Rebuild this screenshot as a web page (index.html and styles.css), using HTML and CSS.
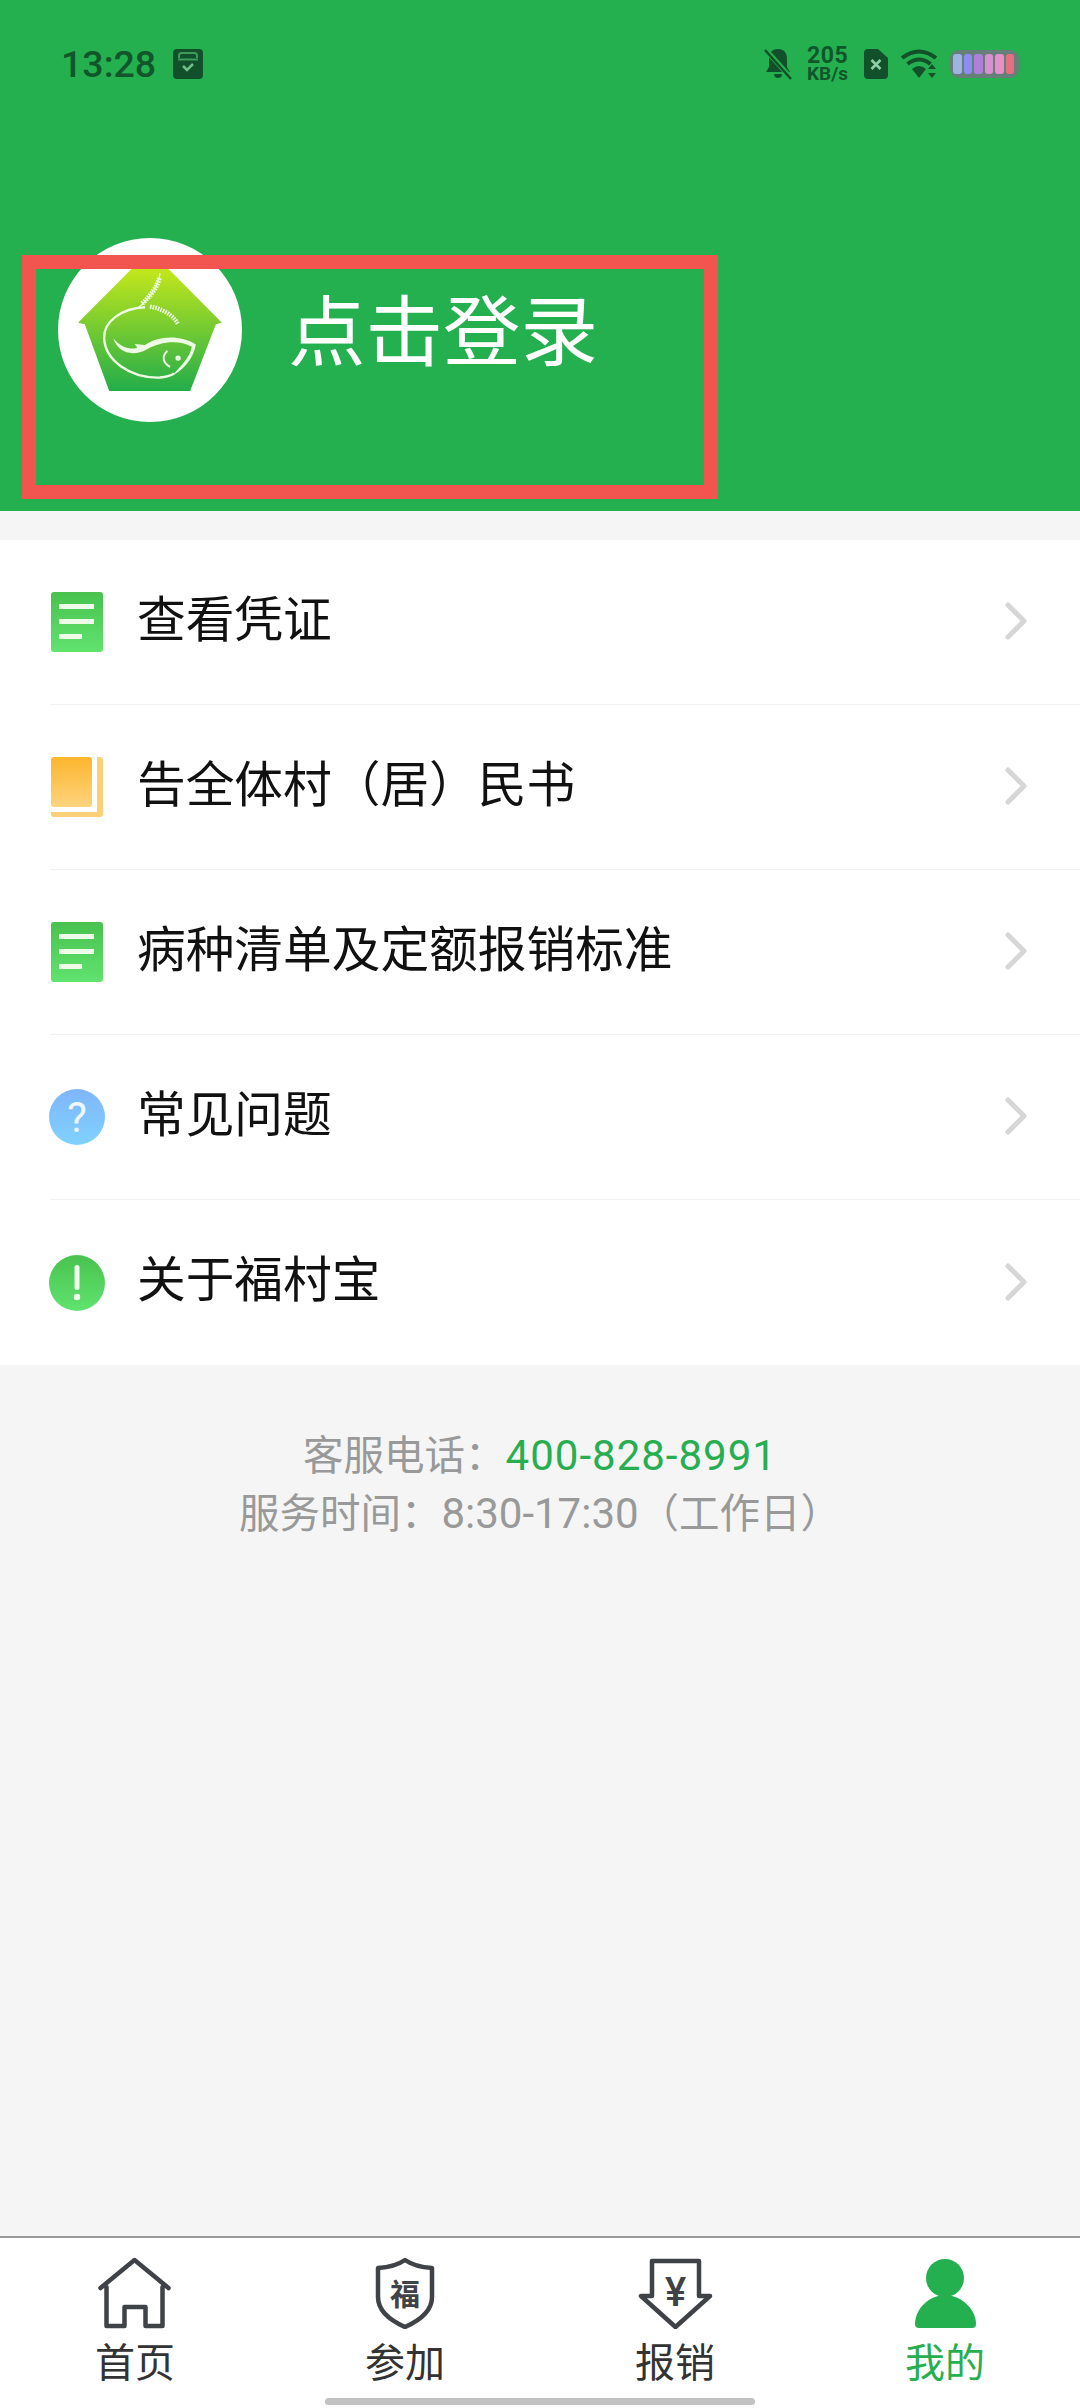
FILE: index.html
```html
<!DOCTYPE html>
<html lang="zh-CN">
<head>
    <meta charset="UTF-8">
    <meta name="viewport" content="width=device-width, initial-scale=1.0">
    <title>我的</title>
    <link rel="stylesheet" href="styles.css">
</head>
<body>
    <div class="page">
        <header class="header">
            <div class="status-bar">
                <div class="status-left">
                    <span class="time">13:28</span>
                    <svg class="status-icon" width="30" height="30" viewBox="0 0 30 30">
                        <rect width="30" height="30" rx="4" fill="#11502a"/>
                        <path d="M6 9V6.5Q6 4 8.5 4h13Q24 4 24 6.500V9" fill="none" stroke="#3f9a5c" stroke-width="2"/>
                        <path d="M5 10.500h20" stroke="#3f9a5c" stroke-width="2"/>
                        <path d="M10 17l4 4 6-6" fill="none" stroke="#6fbf88" stroke-width="2.500"/>
                    </svg>
                </div>
                <div class="status-right">
                    <svg width="28" height="32" viewBox="0 0 28 32">
                        <path d="M14 1c6 0 9 4 9 10v8l3 5H2l3-5v-8c0-6 3-10 9-10zM10 26h8a4 4 0 0 1-8 0z" fill="#11502a"/>
                        <path d="M1 1l26 29" stroke="#24b04f" stroke-width="5"/>
                        <path d="M1 2l26 29" stroke="#11502a" stroke-width="2.500"/>
                    </svg>
                    <div class="net-speed">
                        <span class="net-num">205</span>
                        <span class="net-unit">KB/s</span>
                    </div>
                    <svg width="24" height="30" viewBox="0 0 24 30">
                        <path d="M4 0h10l10 9v17a4 4 0 0 1-4 4H4a4 4 0 0 1-4-4V4a4 4 0 0 1 4-4z" fill="#11502a"/>
                        <path d="M7.500 11l9 9M16.500 11l-9 9" stroke="#8fcfa5" stroke-width="2.600"/>
                    </svg>
                    <svg width="36" height="30" viewBox="0 0 36 30">
                        <g fill="none" stroke="#11502a" stroke-width="4">
                            <path d="M1 9Q18 -4 35 9"/>
                            <path d="M6.500 15Q18 6 29.500 15"/>
                        </g>
                        <path d="M11 20Q18 14 25 20L18 29z" fill="#11502a"/>
                        <path d="M31 15l4 5h-8zM31 29l4-5h-8z" fill="#11502a"/>
                    </svg>
                    <div class="battery">
                        <span class="cell cell-1"></span>
                        <span class="cell cell-2"></span>
                        <span class="cell cell-3"></span>
                        <span class="cell cell-4"></span>
                        <span class="cell cell-5"></span>
                        <span class="cell cell-6"></span>
                    </div>
                </div>
            </div>

            <div class="profile">
                <div class="avatar">
                    <svg width="184" height="184" viewBox="25 25 550 550">
                        <defs>
                            <linearGradient id="houseFill" x1="0" y1="0" x2="0" y2="1">
                                <stop offset="0" stop-color="#cdea18"/>
                                <stop offset="1" stop-color="#22ad4a"/>
                            </linearGradient>
                        </defs>
                        <path d="M85 278L240 122Q300 70 360 122L515 278L497 283L420 482H178L105 283z" fill="url(#houseFill)"/>
                        <path d="M285 232C215 235 160 275 163 325C166 390 240 445 330 442C345 441 360 438 372 430" fill="none" stroke="#eefbe4" stroke-width="7"/>
                        <path d="M190 325C210 350 240 362 262 352L254 342L285 345C320 318 390 312 437 343C430 385 400 420 366 436C395 405 420 380 425 350C385 328 330 335 290 358C250 380 205 370 190 325z" fill="#eefbe4"/>
                        <path d="M352 362C333 380 340 400 360 410" fill="none" stroke="#eefbe4" stroke-width="6"/>
                        <circle cx="384" cy="384" r="8" fill="#eefbe4"/>
                        <path d="M330 130C325 170 300 205 262 236" fill="none" stroke="#eefbe4" stroke-width="4"/>
                        <path d="M328 145C320 175 300 200 275 222" fill="none" stroke="#eefbe4" stroke-width="15" stroke-dasharray="5 3"/>
                        <path d="M300 230C330 235 365 250 383 281" fill="none" stroke="#eefbe4" stroke-width="13" stroke-dasharray="5 3"/>
                    </svg>
                </div>
                <span class="login-text">点击登录</span>
            </div>

            <div class="mark-box"></div>
        </header>

        <ul class="menu">
            <li class="menu-row">
                <div class="menu-inner">
                    <svg class="menu-icon" width="52" height="60" viewBox="0 0 52 60">
                        <defs>
                            <linearGradient id="greenFill" x1="0" y1="0" x2="0" y2="1">
                                <stop offset="0" stop-color="#49c24f"/>
                                <stop offset="1" stop-color="#60e36f"/>
                            </linearGradient>
                        </defs>
                        <rect width="52" height="60" rx="3" fill="url(#greenFill)"/>
                        <rect x="8" y="12" width="35" height="5" fill="#eefbe9"/>
                        <rect x="8" y="27" width="35" height="5" fill="#eefbe9"/>
                        <rect x="8" y="42" width="23" height="5" fill="#eefbe9"/>
                    </svg>
                    <span class="menu-text">查看凭证</span>
                    <svg class="chevron" width="22" height="38" viewBox="0 0 22 38">
                        <path d="M3 3l16 16L3 35" fill="none" stroke="#d6d6d6" stroke-width="5" stroke-linecap="round" stroke-linejoin="round"/>
                    </svg>
                </div>
            </li>
            <li class="menu-row">
                <div class="menu-inner">
                    <svg class="menu-icon" width="52" height="60" viewBox="0 0 52 60">
                        <defs>
                            <linearGradient id="yellowFill" x1="0" y1="0" x2="0" y2="1">
                                <stop offset="0" stop-color="#fdb52c"/>
                                <stop offset="1" stop-color="#fdd47e"/>
                            </linearGradient>
                        </defs>
                        <rect width="41" height="50" rx="3" fill="url(#yellowFill)"/>
                        <path d="M46 0h3q3 0 3 3v54q0 3-3 3H3q-3 0-3-3v-2h46z" fill="#fbd078"/>
                    </svg>
                    <span class="menu-text">告全体村（居）民书</span>
                    <svg class="chevron" width="22" height="38" viewBox="0 0 22 38">
                        <path d="M3 3l16 16L3 35" fill="none" stroke="#d6d6d6" stroke-width="5" stroke-linecap="round" stroke-linejoin="round"/>
                    </svg>
                </div>
            </li>
            <li class="menu-row">
                <div class="menu-inner">
                    <svg class="menu-icon" width="52" height="60" viewBox="0 0 52 60">
                        <rect width="52" height="60" rx="3" fill="url(#greenFill)"/>
                        <rect x="8" y="12" width="35" height="5" fill="#eefbe9"/>
                        <rect x="8" y="27" width="35" height="5" fill="#eefbe9"/>
                        <rect x="8" y="42" width="23" height="5" fill="#eefbe9"/>
                    </svg>
                    <span class="menu-text">病种清单及定额报销标准</span>
                    <svg class="chevron" width="22" height="38" viewBox="0 0 22 38">
                        <path d="M3 3l16 16L3 35" fill="none" stroke="#d6d6d6" stroke-width="5" stroke-linecap="round" stroke-linejoin="round"/>
                    </svg>
                </div>
            </li>
            <li class="menu-row">
                <div class="menu-inner">
                    <svg class="menu-icon round" width="56" height="56" viewBox="0 0 56 56">
                        <defs>
                            <linearGradient id="blueFill" x1="0" y1="0" x2="0" y2="1">
                                <stop offset="0" stop-color="#7fb6fb"/>
                                <stop offset="1" stop-color="#7fd2ff"/>
                            </linearGradient>
                        </defs>
                        <circle cx="28" cy="28" r="28" fill="url(#blueFill)"/>
                        <text x="28" y="43" class="icon-mark">?</text>
                    </svg>
                    <span class="menu-text">常见问题</span>
                    <svg class="chevron" width="22" height="38" viewBox="0 0 22 38">
                        <path d="M3 3l16 16L3 35" fill="none" stroke="#d6d6d6" stroke-width="5" stroke-linecap="round" stroke-linejoin="round"/>
                    </svg>
                </div>
            </li>
            <li class="menu-row">
                <div class="menu-inner">
                    <svg class="menu-icon round" width="56" height="56" viewBox="0 0 56 56">
                        <circle cx="28" cy="28" r="28" fill="url(#greenFill)"/>
                        <rect x="25.500" y="10" width="5" height="25" rx="2.500" fill="#f2fcee"/>
                        <circle cx="28" cy="42" r="3.200" fill="#f2fcee"/>
                    </svg>
                    <span class="menu-text">关于福村宝</span>
                    <svg class="chevron" width="22" height="38" viewBox="0 0 22 38">
                        <path d="M3 3l16 16L3 35" fill="none" stroke="#d6d6d6" stroke-width="5" stroke-linecap="round" stroke-linejoin="round"/>
                    </svg>
                </div>
            </li>
        </ul>

        <div class="service">
            <div>客服电话：<span class="phone">400-828-8991</span></div>
            <div>服务时间：<span class="hours">8:30-17:30</span>（工作日）</div>
        </div>

        <nav class="tabbar">
            <div class="tab">
                <svg width="76" height="72" viewBox="0 0 76 72">
                    <path d="M4 31L38 3l34 28M10 30v39h18V50h21v19h17V30" transform="translate(-.5 0)" fill="none" stroke="#3f4246" stroke-width="4.500" stroke-linecap="round" stroke-linejoin="round"/>
                </svg>
                <span class="tab-label">首页</span>
            </div>
            <div class="tab">
                <svg width="76" height="72" viewBox="0 0 76 72">
                    <path d="M38 3Q48 10 65 11V40Q65 58 38 70Q11 58 11 40V11Q28 10 38 3z" fill="none" stroke="#3f4246" stroke-width="4.500" stroke-linejoin="round"/>
                    <text x="38" y="48" class="shield-mark">福</text>
                </svg>
                <span class="tab-label">参加</span>
            </div>
            <div class="tab">
                <svg width="76" height="72" viewBox="0 0 76 72">
                    <path d="M15 4H62V39H73L38.500 70L4 39H15z" fill="none" stroke="#3f4246" stroke-width="4.500" stroke-linejoin="round"/>
                    <text x="38.500" y="49" class="yuan-mark">¥</text>
                </svg>
                <span class="tab-label">报销</span>
            </div>
            <div class="tab active">
                <svg width="76" height="72" viewBox="0 0 76 72">
                    <circle cx="38" cy="21" r="19" fill="#24b04f"/>
                    <path d="M8 67C8 52 22 38 38 38S69 52 69 67Q69 71 65 71H12Q8 71 8 67z" fill="#24b04f"/>
                </svg>
                <span class="tab-label">我的</span>
            </div>
            <div class="home-bar"></div>
        </nav>
    </div>
</body>
</html>
```

FILE: styles.css
```css
* {
    box-sizing: border-box;
}

body {
    font-family: Roboto, "Noto Sans CJK SC", sans-serif;
    background-color: #f5f5f5;
    margin: 0;
    padding: 0;
}

.page {
    width: 1080px;
    height: 2408px;
    display: flex;
    flex-direction: column;
    overflow: hidden;
}

/* header */
.header {
    position: relative;
    height: 511px;
    background-color: #24b04f;
}

.status-bar {
    height: 128px;
    padding: 0 61px 0 61px;
    display: flex;
    align-items: center;
    justify-content: space-between;
    color: #11552b;
}

.status-left,
.status-right {
    display: flex;
    align-items: center;
}

.status-left {
    gap: 17px;
}

.status-right {
    gap: 13px;
}

.time {
    font-size: 37.5px;
    font-weight: 500;
    line-height: 40px;
}

.net-speed {
    display: flex;
    flex-direction: column;
    font-weight: 700;
    width: 44px;
    margin-left: 2px;
}

.net-num {
    font-size: 23px;
    line-height: 19px;
    letter-spacing: 0.5px;
}

.net-unit {
    font-size: 19px;
    line-height: 17px;
}

.battery {
    width: 69px;
    height: 28px;
    padding: 4px 3px;
    display: flex;
    gap: 2px;
    border-radius: 9px;
    background-color: #667f78;
}

.cell {
    width: 8.5px;
    border-radius: 3px;
}

.cell-1 { background-color: #9db4e2; }
.cell-2 { background-color: #8d8cf2; }
.cell-3 { background-color: #b07fd8; }
.cell-4 { background-color: #d890d0; }
.cell-5 { background-color: #e68fc8; }
.cell-6 { background-color: #e86f7f; }

.profile {
    margin-top: 110px;
    padding-left: 58px;
    display: flex;
    align-items: center;
    gap: 46px;
}

.avatar {
    width: 184px;
    height: 184px;
    border-radius: 50%;
    background: white;
    overflow: hidden;
}

.avatar svg {
    display: block;
}

.login-text {
    font-size: 77.5px;
    line-height: 90px;
    margin-top: 8px;
    color: white;
}

.mark-box {
    position: absolute;
    left: 22px;
    top: 255px;
    width: 696px;
    height: 244px;
    border: 14px solid #f2544f;
}

/* list */
.menu {
    list-style: none;
    margin: 29px 0 0;
    padding: 0 0 0 50px;
    background: white;
}

.menu-inner {
    height: 165px;
    padding-right: 53px;
    display: flex;
    align-items: center;
    border-bottom: 1px solid #f2f2f2;
}

.menu-row:last-child .menu-inner {
    border-bottom: none;
}

.menu-icon {
    margin-left: 1px;
    margin-right: 34px;
    flex-shrink: 0;
}

.menu-icon.round {
    margin-left: -1px;
    margin-right: 32px;
}

.menu-text {
    flex: 1;
    font-size: 48.7px;
    color: #111;
    margin-top: -13px;
}

.chevron {
    margin-top: -2px;
}

.icon-mark {
    font-family: Roboto, sans-serif;
    font-size: 42px;
    text-anchor: middle;
    fill: #eef7ff;
}

.shield-mark {
    font-family: "Noto Sans CJK SC", sans-serif;
    font-size: 30px;
    font-weight: 700;
    text-anchor: middle;
    fill: #3f4246;
}

.yuan-mark {
    font-family: Roboto, sans-serif;
    font-size: 40px;
    font-weight: 500;
    text-anchor: middle;
    fill: #3f4246;
}

/* service info */
.service {
    flex: 1;
    padding-top: 62px;
    text-align: center;
    font-size: 40.5px;
    line-height: 57px;
    color: #999;
}

.phone {
    font-size: 42px;
    letter-spacing: 1px;
    color: #27ae50;
}

.hours {
    font-size: 42px;
}

/* bottom tabs */
.tabbar {
    position: relative;
    height: 172px;
    padding-top: 19px;
    display: grid;
    grid-template-columns: repeat(4, 1fr);
    align-items: start;
    background: white;
    border-top: 2px solid #999;
}

.tab {
    display: flex;
    flex-direction: column;
    align-items: center;
    gap: 11px;
    color: #333;
}

.tab.active {
    color: #27ae50;
}

.tab-label {
    font-size: 40px;
    line-height: 48px;
}

.home-bar {
    position: absolute;
    left: 325px;
    bottom: 3px;
    width: 430px;
    height: 7px;
    border-radius: 4px;
    background-color: #c2c2c2;
}
```
